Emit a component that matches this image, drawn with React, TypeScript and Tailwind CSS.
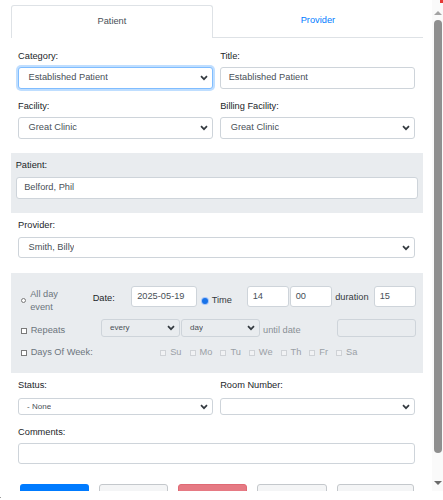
import React from "react";

function Chevron() {
  return (
    <svg width="8" height="6" viewBox="0 0 8 6" className="shrink-0">
      <path d="M1 1.2l3 3 3-3" fill="none" stroke="#343a40" strokeWidth="1.7" />
    </svg>
  );
}

function Select({
  value,
  className = "",
  focus = false,
  small = false,
  disabled = false,
}: {
  value?: string;
  className?: string;
  focus?: boolean;
  small?: boolean;
  disabled?: boolean;
}) {
  const border = focus
    ? "border-[#80bdff] shadow-[0_0_0_2px_rgba(0,123,255,0.25)]"
    : "border-[#ced4da]";
  const bg = disabled ? "bg-[#e9ecef]" : "bg-white";
  const text = small ? "text-[8px]" : "text-[9.25px]";
  return (
    <div
      className={`flex items-center justify-between border rounded-[3px] pr-[4px] ${border} ${bg} ${className}`}
    >
      <span className={`${text} ${small ? "pl-[8px]" : "pl-[9.5px]"} text-[#495057] truncate`}>
        {value}
      </span>
      <Chevron />
    </div>
  );
}

function Input({
  value,
  className = "",
  disabled = false,
}: {
  value?: string;
  className?: string;
  disabled?: boolean;
}) {
  return (
    <div
      className={`flex items-center border border-[#ced4da] rounded-[3px] text-[9.25px] text-[#495057] ${
        disabled ? "bg-[#e9ecef]" : "bg-white"
      } ${className}`}
    >
      {value}
    </div>
  );
}

function Label({ children, className = "" }: { children: React.ReactNode; className?: string }) {
  return (
    <div className={`h-[14px] leading-[14px] text-[9.25px] text-[#212529] ${className}`}>
      {children}
    </div>
  );
}

function Box({ faint = false }: { faint?: boolean }) {
  return (
    <span
      className={`inline-block w-[6px] h-[6px] border shrink-0 ${
        faint ? "border-[#cfd2d6] bg-[#f1f2f4]" : "border-[#7a7a7a] bg-white"
      }`}
    />
  );
}

const days = ["Su", "Mo", "Tu", "We", "Th", "Fr", "Sa"];

export default function App() {
  return (
    <div className="w-[443px] h-[500px] bg-white relative overflow-hidden font-['Liberation_Sans',Arial,sans-serif]">
      <div className="flex h-[491px]">
        {/* form panel */}
        <div className="w-[432px] h-[491px] overflow-hidden pl-[10.7px]">
          <div className="w-[412px]">
            {/* tabs */}
            <div className="flex mt-[5px] h-[33px]">
              <div className="w-[202.5px] border border-b-0 border-[#dee2e6] rounded-t-[3px] flex items-center justify-center text-[9.25px] text-[#495057]">
                Patient
              </div>
              <div className="flex-1 border-b border-[#dee2e6] flex items-center justify-center text-[9.25px] text-[#007bff]">
                Provider
              </div>
            </div>

            <div className="px-[7.4px]">
              <div className="grid grid-cols-2 gap-x-[7px] mt-[11px]">
                <div>
                  <Label>Category:</Label>
                  <Select value="Established Patient" focus className="mt-[4px] h-[22px]" />
                </div>
                <div>
                  <Label>Title:</Label>
                  <Input value="Established Patient" className="mt-[4px] h-[22px] pl-[7.5px]" />
                </div>
              </div>
              <div className="grid grid-cols-2 gap-x-[7px] mt-[10px]">
                <div>
                  <Label>Facility:</Label>
                  <Select value="Great Clinic" className="mt-[4px] h-[22px]" />
                </div>
                <div>
                  <Label>Billing Facility:</Label>
                  <Select value="Great Clinic" className="mt-[4px] h-[22px]" />
                </div>
              </div>
            </div>

            {/* patient block */}
            <div className="mt-[14px] bg-[#e9ecef] pt-[5px] pb-[14px] px-[5px]">
              <Label>Patient:</Label>
              <Input value="Belford, Phil" className="mt-[5px] h-[22px] pl-[7.5px]" />
            </div>

            <div className="px-[7.4px] mt-[5px]">
              <Label>Provider:</Label>
              <Select value="Smith, Billy" className="mt-[5px] h-[21px]" />
            </div>

            {/* date / time block */}
            <div className="mt-[15px] bg-[#e9ecef] pl-[10px] pt-[10px] pb-[13px] text-[9.25px]">
              <div className="flex items-center h-[27px]">
                <div className="w-[72px] flex items-center pt-[8px]">
                  <span className="w-[5.5px] h-[5.5px] rounded-full border border-[#7a7a7a] bg-white shrink-0" />
                  <span className="ml-[4px] leading-[13px] text-[#6c757d]">
                    All day
                    <br />
                    event
                  </span>
                </div>
                <div className="w-[38.5px] text-[#212529] pt-[4px]">Date:</div>
                <Input value="2025-05-19" className="w-[66px] h-[21px] pl-[5px]" />
                <div className="w-[50px] flex items-center pl-[5px] pt-[8px]">
                  <span className="w-[6px] h-[6px] rounded-full bg-[#1a73e8] ring-1 ring-[#a8c7fa] shrink-0" />
                  <span className="ml-[3.5px] text-[#343a40]">Time</span>
                </div>
                <Input value="14" className="w-[42px] h-[21px] pl-[4.5px]" />
                <Input value="00" className="w-[42px] h-[21px] pl-[4.5px] ml-[1px]" />
                <div className="w-[42px] pl-[3px] pt-[2px] text-[#343a40]">duration</div>
                <Input value="15" className="w-[42px] h-[21px] pl-[4.5px]" />
              </div>

              <div className="flex items-center h-[18px] mt-[9px]">
                <div className="w-[80.3px] flex items-center pt-[5px]">
                  <Box />
                  <span className="ml-[4px] text-[#6c757d]">Repeats</span>
                </div>
                <Select value="every" small disabled className="w-[79px] h-[18px]" />
                <Select value="day" small disabled className="w-[79px] h-[18px] ml-[1px]" />
                <div className="w-[77px] pl-[3px] pt-[6px] text-[#8a9096]">until date</div>
                <Input disabled className="w-[79px] h-[18px]" />
              </div>

              <div className="flex items-center h-[14px] mt-[9px]">
                <div className="w-[139.5px] flex items-center">
                  <Box />
                  <span className="ml-[4px] text-[#6c757d]">Days Of Week:</span>
                </div>
                <div className="flex items-center gap-x-[8px]">
                  {days.map((d) => (
                    <div key={d} className="flex items-center">
                      <Box faint />
                      <span className="ml-[4px] text-[#9aa0a6]">{d}</span>
                    </div>
                  ))}
                </div>
              </div>
            </div>

            <div className="px-[7.4px]">
              <div className="grid grid-cols-2 gap-x-[7px] mt-[5px]">
                <div>
                  <Label>Status:</Label>
                  <Select value="- None" small className="mt-[6px] h-[17px]" />
                </div>
                <div>
                  <Label>Room Number:</Label>
                  <Select className="mt-[6px] h-[17px]" />
                </div>
              </div>
              <Label className="mt-[10px]">Comments:</Label>
              <Input className="mt-[4px] h-[21px]" />
            </div>

            {/* action buttons (cut off by the scroll area) */}
            <div className="flex mt-[20px] pl-[9.3px] gap-x-[10px]">
              <div className="w-[69px] h-[24px] rounded-[3px] bg-[#007bff]" />
              <div className="w-[69px] h-[24px] rounded-[3px] bg-[#f4f5f6] border border-[#c4c8cc]" />
              <div className="w-[69px] h-[24px] rounded-[3px] bg-[#e67a84] border border-[#e06a75]" />
              <div className="w-[70px] h-[24px] rounded-[3px] bg-[#f4f5f6] border border-[#c4c8cc]" />
              <div className="w-[77px] h-[24px] rounded-[3px] bg-[#f4f5f6] border border-[#c4c8cc]" />
            </div>
          </div>
        </div>

        {/* scrollbar */}
        <div className="w-[11px] h-[491px] bg-[#fafafa] flex flex-col pl-[2px]">
          <div className="flex justify-end h-[3px]">
            <span className="w-[3px] h-[3px] bg-[#e53935]" />
          </div>
          <svg width="8" height="4" viewBox="0 0 8 4" className="mt-[8px]">
            <path d="M0 4L4 0l4 4z" fill="#a3a3a3" />
          </svg>
          <div className="mt-[5px] w-[8px] h-[433px] rounded-full bg-[#8f8f8f]" />
          <svg width="8" height="4" viewBox="0 0 8 4" className="mt-[28px]">
            <path d="M0 0h8L4 4z" fill="#6b6b6b" />
          </svg>
        </div>
      </div>
      <div className="h-[9px] pt-[6px]">
        <span className="block w-[1px] h-[1px] bg-[#9a9a9a]" />
      </div>
    </div>
  );
}
